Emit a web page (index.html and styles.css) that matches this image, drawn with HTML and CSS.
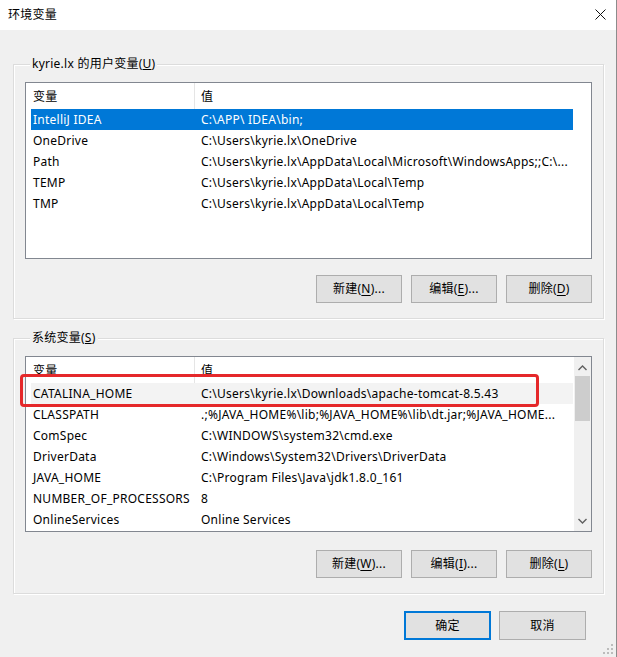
FILE: index.html
```html
<!DOCTYPE html>
<html lang="zh-CN">
<head>
<meta charset="utf-8">
<title>环境变量</title>
<link rel="stylesheet" href="styles.css">
</head>
<body>
<div class="window">
  <div class="titlebar">
    <span class="title">环境变量</span>
    <svg class="close" width="11" height="11" viewBox="0 0 11 11"><path d="M0.5 0.5 L10.5 10.5 M10.5 0.5 L0.5 10.5" stroke="#111" stroke-width="1"/></svg>
  </div>
  <div class="content">
    <div class="group">
      <span class="group-label">kyrie.lx 的用户变量(<u>U</u>)</span>
      <div class="list list-user">
        <div class="list-main">
          <div class="row header"><span class="c1">变量</span><span class="c2">值</span></div>
          <div class="row selected"><span class="c1">IntelliJ IDEA</span><span class="c2">C:\APP\ IDEA\bin;</span></div>
          <div class="row"><span class="c1">OneDrive</span><span class="c2">C:\Users\kyrie.lx\OneDrive</span></div>
          <div class="row"><span class="c1">Path</span><span class="c2">C:\Users\kyrie.lx\AppData\Local\Microsoft\WindowsApps;;C:\...</span></div>
          <div class="row"><span class="c1">TEMP</span><span class="c2">C:\Users\kyrie.lx\AppData\Local\Temp</span></div>
          <div class="row"><span class="c1">TMP</span><span class="c2">C:\Users\kyrie.lx\AppData\Local\Temp</span></div>
        </div>
      </div>
      <div class="buttons">
        <button class="btn">新建(<u>N</u>)...</button>
        <button class="btn">编辑(<u>E</u>)...</button>
        <button class="btn">删除(<u>D</u>)</button>
      </div>
    </div>

    <div class="group group-sys">
      <span class="group-label">系统变量(<u>S</u>)</span>
      <div class="list list-sys">
        <div class="list-main">
          <div class="row header"><span class="c1">变量</span><span class="c2">值</span></div>
          <div class="row hover"><span class="c1">CATALINA_HOME</span><span class="c2">C:\Users\kyrie.lx\Downloads\apache-tomcat-8.5.43</span></div>
          <div class="row"><span class="c1">CLASSPATH</span><span class="c2">.;%JAVA_HOME%\lib;%JAVA_HOME%\lib\dt.jar;%JAVA_HOME...</span></div>
          <div class="row"><span class="c1">ComSpec</span><span class="c2">C:\WINDOWS\system32\cmd.exe</span></div>
          <div class="row"><span class="c1">DriverData</span><span class="c2">C:\Windows\System32\Drivers\DriverData</span></div>
          <div class="row"><span class="c1">JAVA_HOME</span><span class="c2">C:\Program Files\Java\jdk1.8.0_161</span></div>
          <div class="row"><span class="c1">NUMBER_OF_PROCESSORS</span><span class="c2">8</span></div>
          <div class="row"><span class="c1">OnlineServices</span><span class="c2">Online Services</span></div>
        </div>
        <div class="scrollbar">
          <svg class="arrow" width="9" height="6" viewBox="0 0 9 6"><path d="M0.5 5 L4.5 1 L8.5 5" fill="none" stroke="#606060" stroke-width="1.4"/></svg>
          <div class="thumb"></div>
          <div class="track"></div>
          <svg class="arrow" width="9" height="6" viewBox="0 0 9 6"><path d="M0.5 1 L4.5 5 L8.5 1" fill="none" stroke="#606060" stroke-width="1.4"/></svg>
        </div>
        <div class="highlight"></div>
      </div>
      <div class="buttons buttons-sys">
        <button class="btn">新建(<u>W</u>)...</button>
        <button class="btn">编辑(<u>I</u>)...</button>
        <button class="btn">删除(<u>L</u>)</button>
      </div>
    </div>

    <div class="footer">
      <button class="btn btn-lg btn-default">确定</button>
      <button class="btn btn-lg">取消</button>
    </div>
    <svg class="grip" width="10" height="10" viewBox="0 0 10 10">
      <rect x="8" y="0" width="2" height="2" fill="#bcbcbc"/>
      <rect x="4" y="4" width="2" height="2" fill="#bcbcbc"/>
      <rect x="8" y="4" width="2" height="2" fill="#bcbcbc"/>
      <rect x="0" y="8" width="2" height="2" fill="#bcbcbc"/>
      <rect x="4" y="8" width="2" height="2" fill="#bcbcbc"/>
      <rect x="8" y="8" width="2" height="2" fill="#bcbcbc"/>
    </svg>
  </div>
</div>
</body>
</html>
```
FILE: styles.css
```css
* { box-sizing: border-box; }
html, body { margin: 0; padding: 0; }
body {
  width: 617px;
  height: 657px;
  overflow: hidden;
  font-family: "Noto Sans", "Noto Sans CJK SC", sans-serif;
  font-size: 12px;
  letter-spacing: 0.25px;
  color: #000;
  background: #f0f0f0;
}
.window {
  width: 617px;
  height: 657px;
  border-right: 1px solid #8c8c8c;
  background: #f0f0f0;
  position: relative;
}
.titlebar {
  height: 30px;
  background: #fff;
  display: flex;
  align-items: center;
  justify-content: space-between;
  padding: 0 10px 2px 8px;
}
.title { font-size: 12px; }
.close { display: block; }

.content { padding-top: 34px; position: relative; height: 627px; }

.group {
  margin: 0 0 0 13px;
  width: 591px;
  border: 1px solid #dcdcdc;
  box-shadow: inset 1px 1px 0 #fff, 1px 1px 0 #fff;
  padding: 0 11px 15px 11px;
}
.group-sys { margin-top: 19px; }
.group-label {
  display: block;
  width: max-content;
  margin: -9px 0 0 5px;
  padding: 0 2px;
  height: 16px;
  line-height: 16px;
  background: #f0f0f0;
}
.list {
  margin-top: 10px;
  border: 1px solid #828790;
  background: #fff;
  display: flex;
  position: relative;
}
.list-user { height: 177px; }
.list-sys { height: 176px; }
.list-main {
  width: 547px;
  padding-left: 5px;
}
.row {
  display: grid;
  grid-template-columns: 164px 1fr;
  height: 21px;
  line-height: 21px;
  white-space: nowrap;
}
.row .c1 { padding-left: 2px; overflow: hidden; }
.row .c2 { padding-left: 6px; overflow: hidden; }
.row.header { height: 26px; line-height: 27px; }
.row.header .c1 { border-right: 1px solid #e5e5e5; }
.row.selected { background: #0078d7; color: #fff; }
.row.hover { background: #f3f3f3; }

.scrollbar {
  width: 17px;
  margin-left: auto;
  background: #f0f0f0;
  display: flex;
  flex-direction: column;
  align-items: center;
}
.arrow { display: block; margin: 8px 0 5px; flex: none; }
.scrollbar .arrow:last-child { margin: 5px 0 7px; }
.thumb { width: 15px; height: 45px; background: #cdcdcd; flex: none; }
.track { flex: 1; }

.highlight {
  position: absolute;
  left: -6px;
  top: 17px;
  width: 519px;
  height: 33px;
  border: 3px solid #e5282a;
  border-radius: 4px;
  pointer-events: none;
}

.buttons {
  display: flex;
  justify-content: flex-end;
  gap: 9px;
  margin-top: 16px;
}
.buttons-sys { margin-top: 18px; }
.btn {
  font-family: inherit;
  font-size: 12px;
  letter-spacing: inherit;
  color: #000;
  width: 86px;
  height: 28px;
  background: #e1e1e1;
  border: 1px solid #adadad;
  padding: 0;
  margin: 0;
  line-height: 26px;
}
.btn u { text-decoration: underline; text-underline-offset: 2px; }

.footer {
  display: flex;
  justify-content: flex-end;
  gap: 8px;
  margin-top: 17px;
  padding-right: 30px;
}
.btn-lg { width: 87px; height: 29px; }
.btn-default { border: 2px solid #0078d7; }

.grip { position: absolute; right: 3px; bottom: 3px; }
```
